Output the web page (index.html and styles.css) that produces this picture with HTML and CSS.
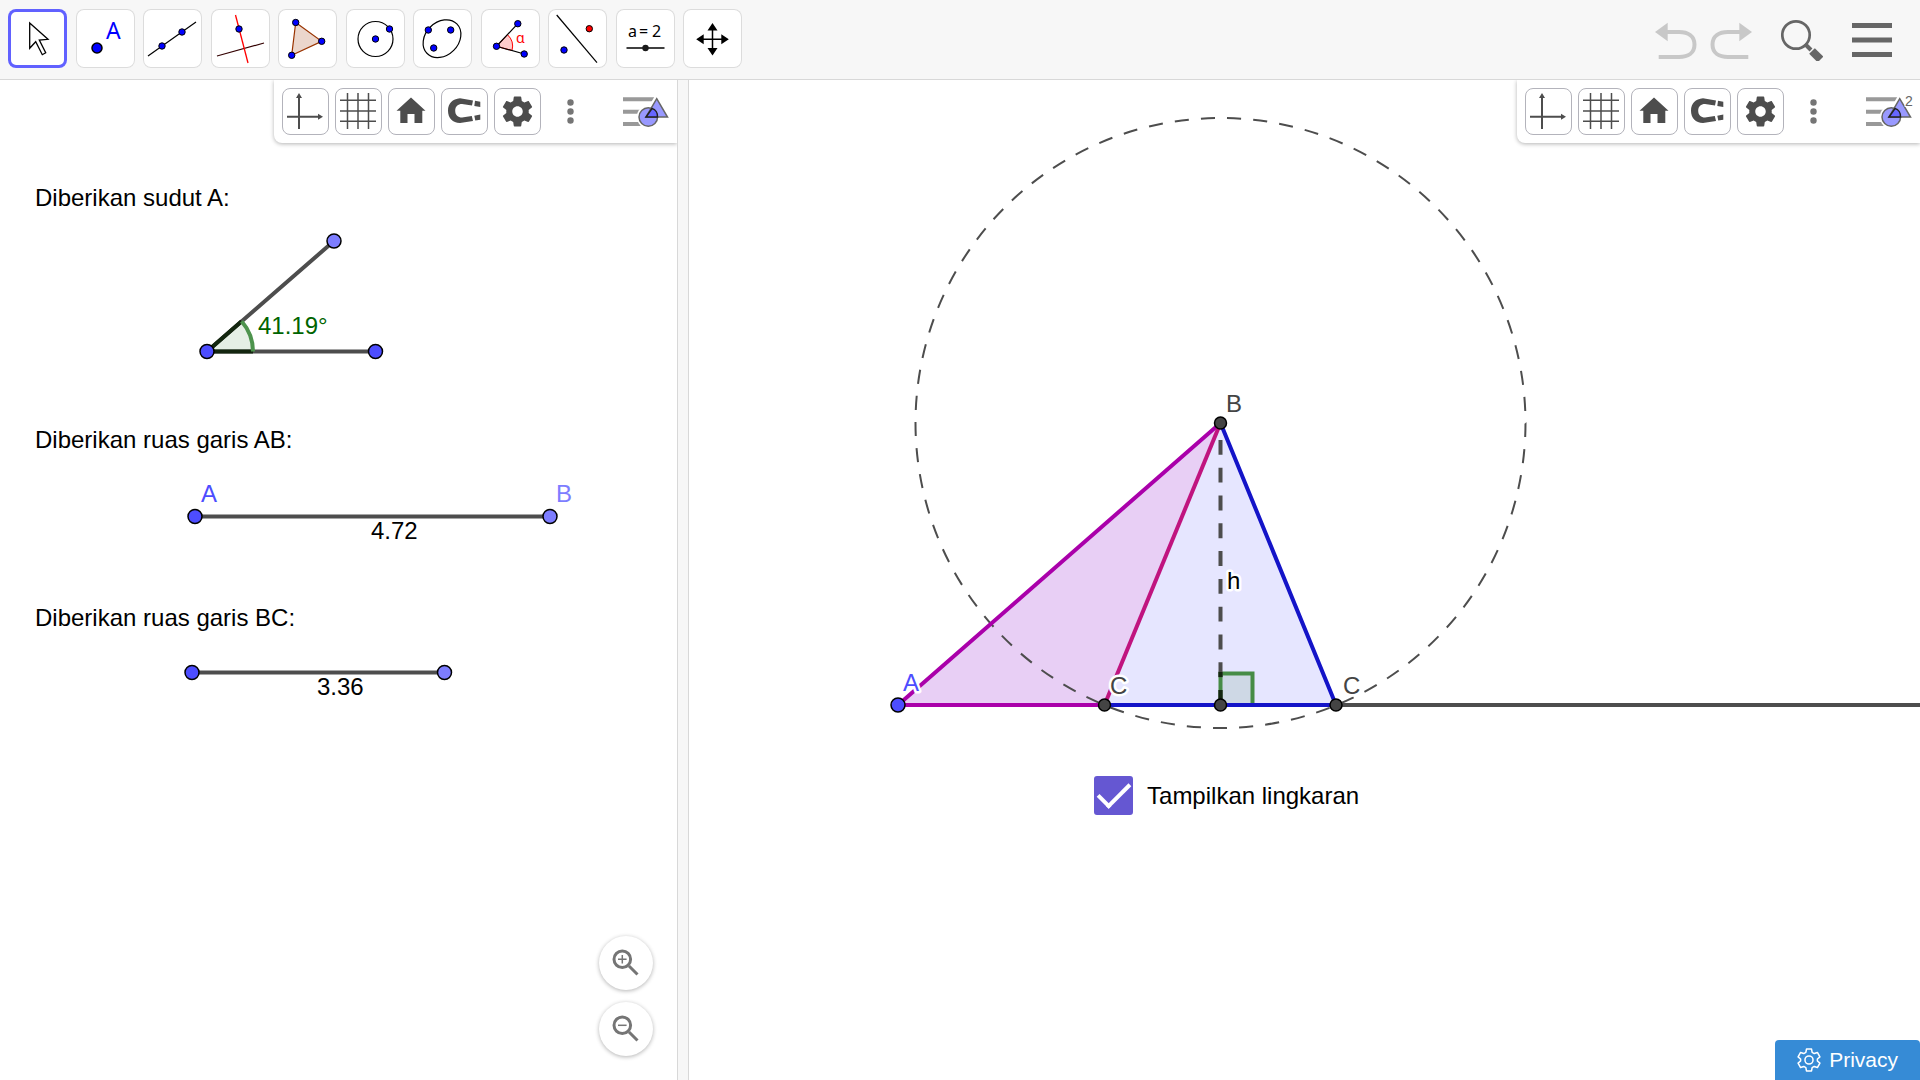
FILE: index.html
```
<!DOCTYPE html>
<html lang="id">
<head>
    <meta charset="UTF-8">
    <meta name="viewport" content="width=device-width, initial-scale=1.0">
    <title>GeoGebra Classic</title>
    <link rel="stylesheet" href="styles.css">
</head>
<body>
    <!-- icons shared by both style bars -->
    <svg class="symbols" aria-hidden="true">
        <symbol id="icon-axes" viewBox="0 0 45 45">
            <path d="M16 40V7M4 27.700H37" stroke="#4d4d4d" stroke-width="2" fill="none"/>
            <path d="M16 4l3 5h-6zM40 27.700l-5 -3v6z" fill="#4d4d4d"/>
        </symbol>
        <symbol id="icon-grid" viewBox="0 0 45 45">
            <path d="M11.500 4V40M22 4V40M32.500 4V40M4 11.300H40M4 22H40M4 32.300H40" stroke="#4d4d4d" stroke-width="1.500" fill="none"/>
        </symbol>
        <symbol id="icon-home" viewBox="0 0 45 45">
            <path d="M22 8.500L36.500 21.700H33.300V34H25.500V25H18.500V34H11.300V21.700H7.500z" fill="#4d4d4d"/>
        </symbol>
        <symbol id="icon-magnet" viewBox="0 0 45 45">
            <path d="M31 11.500L18 9.300C10.500 9.800 6 14.500 6 21.700S10.500 33.600 18 34L31 32L29.800 27L20 28.500C16 28.500 13.200 26 13.200 21.700S16 15 20 15L30 16.500zM33 11.800l5.300 1V18l-6 -1zM32.300 26.700l6 -1.200v5.300l-5 .700z" fill="#4d4d4d"/>
        </symbol>
        <symbol id="icon-gear" viewBox="-3 -3 30 30">
            <path fill="#4d4d4d" d="M19.430 12.980c.04-.32.07-.64.07-.98s-.03-.66-.07-.98l2.110-1.650c.19-.15.24-.42.12-.64l-2-3.460c-.12-.22-.39-.3-.61-.22l-2.490 1c-.52-.4-1.080-.73-1.690-.98l-.38-2.650C14.460 2.180 14.250 2 14 2h-4c-.25 0-.46.18-.49.42l-.38 2.650c-.61.25-1.170.59-1.690.98l-2.490-1c-.23-.09-.49 0-.61.22l-2 3.460c-.13.22-.07.49.12.64l2.110 1.650c-.04.32-.07.65-.07.98s.03.66.07.98l-2.110 1.650c-.19.15-.24.42-.12.64l2 3.460c.12.22.39.3.61.22l2.490-1c.52.4 1.080.73 1.690.98l.38 2.650c.03.24.24.42.49.42h4c.25 0 .46-.18.49-.42l.38-2.650c.61-.25 1.170-.59 1.690-.98l2.490 1c.23.09.49 0 .61-.22l2-3.460c.12-.22.07-.49-.12-.64l-2.110-1.650zM12 15.500c-1.930 0-3.500-1.570-3.500-3.500s1.570-3.500 3.500-3.500 3.500 1.570 3.500 3.500-1.570 3.500-3.500 3.500z"/>
        </symbol>
        <symbol id="icon-dots" viewBox="0 0 47 47">
            <g fill="#757575"><circle cx="23.500" cy="14.500" r="3.200"/><circle cx="23.500" cy="23.500" r="3.200"/><circle cx="23.500" cy="32.500" r="3.200"/></g>
        </symbol>
        <symbol id="icon-view" viewBox="0 0 48 47">
            <path d="M2 11.300H34M2 23.700H20M2 36H24" stroke="#999" stroke-width="4"/>
            <path d="M35.700 9.700L47 29H24.700z" stroke="#fff" stroke-width="5" fill="#fff"/>
            <circle cx="27.300" cy="29" r="11.500" fill="#fff"/>
            <circle cx="27.300" cy="29" r="9.300" fill="#9999ff" stroke="#666" stroke-width="1.500"/>
            <path d="M35.700 10.700L46.500 29H25z" fill="#9999ff" stroke="#666" stroke-width="1.500"/>
            <path d="M31 20.500L25 29H36.500C36.800 25 34.500 21.500 31 20.500z" fill="#6666ff" stroke="#222" stroke-width="1.500"/>
        </symbol>
    </svg>

    <header class="toolbar">
        <div class="tools">
            <button class="tool selected" aria-label="Pindah">
                <svg viewBox="0 0 59 59"><path d="M21.700 14L40 30.300L31.300 31L37.700 43.700L34.300 45.700L27.700 32.700L21.700 39.300z" fill="#fff" stroke="#000" stroke-width="1.300"/></svg>
            </button>
            <button class="tool" aria-label="Titik">
                <svg viewBox="0 0 59 59"><circle cx="21" cy="39" r="5" fill="#00f" stroke="#000" stroke-width="1.500"/><text class="tool-letter" x="30" y="30">A</text></svg>
            </button>
            <button class="tool" aria-label="Garis">
                <svg viewBox="0 0 59 59"><path d="M5 47L53 13" stroke="#000" stroke-width="1.200"/><g class="dots"><circle cx="19" cy="37" r="3.200"/><circle cx="39" cy="23" r="3.200"/></g></svg>
            </button>
            <button class="tool" aria-label="Garis tegak lurus">
                <svg viewBox="0 0 59 59"><path d="M6 47L53 34" stroke="#300" stroke-width="1.200"/><path d="M24.500 6L37 54" stroke="#f00" stroke-width="1.300"/><g class="dots"><circle cx="28" cy="20" r="3.200"/></g></svg>
            </button>
            <button class="tool" aria-label="Poligon">
                <svg viewBox="0 0 59 59"><path d="M17.700 13.500L43.700 32.300L13.700 46.300z" fill="#ebd6cc" stroke="#993300" stroke-width="1.200"/><g class="dots"><circle cx="17.700" cy="13.500" r="3.200"/><circle cx="43.700" cy="32.300" r="3.200"/><circle cx="13.700" cy="46.300" r="3.200"/></g></svg>
            </button>
            <button class="tool" aria-label="Lingkaran">
                <svg viewBox="0 0 59 59"><circle cx="29.500" cy="30" r="17.500" fill="none" stroke="#000" stroke-width="1.200"/><g class="dots"><circle cx="29.500" cy="30" r="3.200"/><circle cx="43.500" cy="20" r="3.200"/></g></svg>
            </button>
            <button class="tool" aria-label="Elips">
                <svg viewBox="0 0 59 59"><ellipse cx="29" cy="29.700" rx="21" ry="16.500" transform="rotate(-45 29 29.700)" fill="none" stroke="#000" stroke-width="1.200"/><g class="dots"><circle cx="15.300" cy="21" r="3.200"/><circle cx="37.700" cy="21" r="3.200"/><circle cx="20.700" cy="39" r="3.200"/></g></svg>
            </button>
            <button class="tool" aria-label="Sudut">
                <svg viewBox="0 0 59 59"><path d="M15.500 37.300L26.500 25.700A16 16 0 0 1 31 41.500z" fill="#ffcccc" stroke="#f00" stroke-width="1"/><path d="M36.800 14.700L15.500 37.300L43.200 45" fill="none" stroke="#000" stroke-width="1.200"/><text class="tool-alpha" x="35" y="34">α</text><g class="dots"><circle cx="36.800" cy="14.700" r="3.200"/><circle cx="15.500" cy="37.300" r="3.200"/><circle cx="43.200" cy="45" r="3.200"/></g></svg>
            </button>
            <button class="tool" aria-label="Refleksi">
                <svg viewBox="0 0 59 59"><path d="M8.700 6L49 53.700" stroke="#000" stroke-width="1.200"/><g class="dots"><circle class="red" cx="41.300" cy="19.700" r="3.200"/><circle cx="16" cy="41" r="3.200"/></g></svg>
            </button>
            <button class="tool" aria-label="Slider">
                <svg viewBox="0 0 59 59"><text class="tool-value" y="28"><tspan x="12">a</tspan><tspan x="23">=</tspan><tspan x="36">2</tspan></text><path d="M10.500 39H48.500" stroke="#000" stroke-width="1.300"/><circle cx="29.500" cy="39" r="3.200" fill="#1a1a1a"/></svg>
            </button>
            <button class="tool" aria-label="Geser tampilan">
                <svg viewBox="0 0 59 59"><path d="M17 30.300H42M29.500 18V43" stroke="#000" stroke-width="1.500"/><path d="M29.500 14l5 7.500h-10zM29.500 46.600l5 -7.500h-10zM13.200 30.300l7.500 -5v10zM45.800 30.300l-7.500 -5v10z"/></svg>
            </button>
        </div>
        <div class="actions">
            <div class="history">
                <button class="action" aria-label="Urungkan">
                    <svg viewBox="0 0 42 42"><path d="M0 13L12.700 3.700V22.300z" fill="#c8c8c8"/><path d="M12 13H24C33 13 39.500 17 39.500 25.500S33 38 24 38H3.700" fill="none" stroke="#c8c8c8" stroke-width="4"/></svg>
                </button>
                <button class="action" aria-label="Ulangi">
                    <svg viewBox="0 0 42 42"><path d="M42 13L29.300 3.700V22.300z" fill="#c8c8c8"/><path d="M30 13H18C9 13 2.500 17 2.500 25.500S9 38 18 38H38.300" fill="none" stroke="#c8c8c8" stroke-width="4"/></svg>
                </button>
            </div>
            <button class="action" aria-label="Cari">
                <svg viewBox="0 0 42 42"><circle cx="15" cy="16" r="13.700" fill="none" stroke="#666" stroke-width="2.700"/><path d="M24 25L30 31" stroke="#666" stroke-width="4"/><path d="M31 32L39.500 40.500" stroke="#666" stroke-width="8"/></svg>
            </button>
            <button class="action" aria-label="Menu">
                <svg viewBox="0 0 42 42"><path d="M1 6.500H41M1 21H41M1 35.500H41" stroke="#666" stroke-width="5"/></svg>
            </button>
        </div>
    </header>

    <main class="views">
        <section class="view">
            <svg class="canvas">
                <text x="35" y="126">Diberikan sudut A:</text>
                <path class="segment" d="M334 161L207 271.500H375.500"/>
                <path d="M207 271.500L241.600 241.200A46 46 0 0 1 253 271.500z" fill="#006400" fill-opacity=".1"/>
                <path d="M241.600 241.200L207 271.500H253" fill="none" stroke="#13260f" stroke-width="4"/>
                <path d="M241.600 241.200A46 46 0 0 1 253 271.500" fill="none" stroke="#4d934d" stroke-width="4"/>
                <text class="angle" x="258" y="254">41.19°</text>
                <circle class="point" cx="207" cy="271.500" r="7"/>
                <circle class="point" cx="375.500" cy="271.500" r="7"/>
                <circle class="point light" cx="334" cy="161" r="7"/>

                <text x="35" y="368">Diberikan ruas garis AB:</text>
                <path class="segment" d="M195 436.500H550"/>
                <circle class="point" cx="195" cy="436.500" r="7"/>
                <circle class="point light" cx="550" cy="436.500" r="7"/>
                <text class="name-free" x="201" y="422">A</text>
                <text class="name-light" x="556" y="422">B</text>
                <text x="371" y="459">4.72</text>

                <text x="35" y="546">Diberikan ruas garis BC:</text>
                <path class="segment" d="M192 592.500H444.500"/>
                <circle class="point" cx="192" cy="592.500" r="7"/>
                <circle class="point light" cx="444.500" cy="592.500" r="7"/>
                <text x="317" y="615">3.36</text>
            </svg>
            <div class="stylebar">
                <button aria-label="Sumbu"><svg><use href="#icon-axes"/></svg></button>
                <button aria-label="Kisi"><svg><use href="#icon-grid"/></svg></button>
                <button aria-label="Tampilan standar"><svg><use href="#icon-home"/></svg></button>
                <button aria-label="Tangkap titik"><svg><use href="#icon-magnet"/></svg></button>
                <button aria-label="Pengaturan"><svg><use href="#icon-gear"/></svg></button>
                <button class="plain" aria-label="Lainnya"><svg><use href="#icon-dots"/></svg></button>
                <button class="plain view-switch" aria-label="Tampilan grafik"><svg><use href="#icon-view"/></svg></button>
            </div>
            <div class="zoom">
                <button aria-label="Perbesar"><svg viewBox="0 0 54 54"><circle cx="23.300" cy="23.300" r="8.300"/><path d="M30 30L38.500 38.500"/><path class="thin" d="M19 23.300H27.600M23.300 19V27.600"/></svg></button>
                <button aria-label="Perkecil"><svg viewBox="0 0 54 54"><circle cx="23.300" cy="23.300" r="8.300"/><path d="M30 30L38.500 38.500"/><path class="thin" d="M19 23.300H27.600"/></svg></button>
            </div>
        </section>

        <div class="divider"></div>

        <section class="view">
            <svg class="canvas">
                <path d="M531.500 343L415.500 625H647z" fill="#e6e6ff"/>
                <path d="M209 625L531.500 343L415.500 625z" fill="#e8cff5"/>
                <!-- 73 dashes around the circle -->
                <circle cx="531.500" cy="343" r="305" pathLength="1898" fill="none" stroke="#4d4d4d" stroke-width="2" stroke-dasharray="14 12"/>
                <path class="segment" d="M647 625H3000"/>
                <path d="M531.500 625V593.500H563.500V625z" fill="#006400" fill-opacity=".1"/>
                <path d="M531.500 625V593.500H563.500V625" fill="none" stroke="#468c46" stroke-width="4"/>
                <path class="segment altitude" d="M531.500 625V343" pathLength="284"/>
                <path d="M531.500 625V610M531.500 597V592" stroke="#13260f" stroke-width="4"/>
                <path d="M415.500 625H647L531.500 343" fill="none" stroke="#1414c8" stroke-width="4"/>
                <path d="M415.500 625H209L531.500 343" fill="none" stroke="#aa00aa" stroke-width="4"/>
                <path d="M531.500 343L415.500 625" stroke="#c0147f" stroke-width="4"/>

                <g class="halo">
                    <text class="name-free" x="214" y="611">A</text>
                    <text class="name" x="421" y="614">C</text>
                    <text class="name" x="654" y="614">C</text>
                    <text class="name" x="537" y="332">B</text>
                    <text x="538" y="509">h</text>
                </g>
                <circle class="point" cx="209" cy="625" r="7"/>
                <circle class="point dark" cx="415.500" cy="625" r="6"/>
                <circle class="point dark" cx="531.500" cy="625" r="6"/>
                <circle class="point dark" cx="647" cy="625" r="6"/>
                <circle class="point dark" cx="531.500" cy="343" r="6"/>
            </svg>
            <div class="stylebar">
                <button aria-label="Sumbu"><svg><use href="#icon-axes"/></svg></button>
                <button aria-label="Kisi"><svg><use href="#icon-grid"/></svg></button>
                <button aria-label="Tampilan standar"><svg><use href="#icon-home"/></svg></button>
                <button aria-label="Tangkap titik"><svg><use href="#icon-magnet"/></svg></button>
                <button aria-label="Pengaturan"><svg><use href="#icon-gear"/></svg></button>
                <button class="plain" aria-label="Lainnya"><svg><use href="#icon-dots"/></svg></button>
                <button class="plain view-switch" aria-label="Tampilan grafik 2"><svg><use href="#icon-view"/><text x="41" y="18">2</text></svg></button>
            </div>
            <label class="show-circle">
                <input type="checkbox" checked>
                Tampilkan lingkaran
            </label>
        </section>
    </main>

    <button class="privacy">
        <svg viewBox="1 1 22 22"><path fill="none" stroke="#fff" stroke-width="1.400" stroke-linejoin="round" d="M9.700 2h4.600l.6 3 1.900 1.100 2.900-1 2.300 4-2.300 2v1.800l2.300 2-2.300 4-2.900-1-1.900 1.100-.6 3H9.700l-.6-3-1.900-1.100-2.900 1-2.300-4 2.300-2v-1.800l-2.300-2 2.300-4 2.900 1L9.100 5z"/><circle cx="12" cy="12" r="3.700" fill="none" stroke="#fff" stroke-width="1.400"/></svg>
        Privacy
    </button>
</body>
</html>
```

FILE: styles.css
```
* {
    box-sizing: border-box;
}

body {
    font-family: "Liberation Sans", Arial, sans-serif;
    font-size: 24px;
    margin: 0;
    height: 100vh;
    display: flex;
    flex-direction: column;
    overflow: hidden;
    background: white;
    color: black;
}

button {
    padding: 0;
    border: none;
    background: none;
    font-family: inherit;
    cursor: pointer;
}

svg {
    display: block;
}

.symbols {
    position: absolute;
    width: 0;
    height: 0;
}

/* top toolbar */
.toolbar {
    display: flex;
    justify-content: space-between;
    align-items: center;
    height: 80px;
    padding: 0 27px 2px 8px;
    background: #f7f7f7;
    border-bottom: 1px solid #d8d8d8;
    flex-shrink: 0;
}

.tools {
    display: flex;
    justify-content: space-between;
    width: 734px;
}

.tool {
    width: 59px;
    height: 59px;
    border-radius: 8px;
    background: white;
    box-shadow: inset 0 0 0 1px #dcdcdc;
}

.tool.selected {
    box-shadow: inset 0 0 0 3px #6161ff;
}

.tool svg {
    width: 59px;
    height: 59px;
}

.dots circle {
    fill: #0000ff;
    stroke: black;
    stroke-width: 1px;
}

.dots .red {
    fill: #ff0000;
}

.tool-letter {
    font: 23px "Noto Sans", sans-serif;
    fill: #0000ff;
}

.tool-alpha {
    font: 14px "Noto Sans", sans-serif;
    fill: #ff0000;
}

.tool-value {
    font: 16px "Noto Sans", sans-serif;
}

.actions {
    display: flex;
    align-items: center;
    gap: 28px;
    padding-top: 2px;
}

.history {
    display: flex;
    gap: 13px;
    margin-right: 1px;
}

.action svg {
    width: 42px;
    height: 42px;
}

/* graphics views */
.views {
    flex: 1;
    display: grid;
    grid-template-columns: minmax(0, 11fr) 12px minmax(0, 20fr);
    min-height: 0;
}

.view {
    position: relative;
    overflow: hidden;
}

.divider {
    background: #f7f7f7;
    border-left: 1px solid #d8d8d8;
    border-right: 1px solid #d8d8d8;
}

.canvas {
    width: 100%;
    height: 100%;
}

.segment {
    fill: none;
    stroke: #4d4d4d;
    stroke-width: 4px;
}

.altitude {
    stroke-dasharray: 15 13;
}

.point {
    fill: #4d4dff;
    stroke: black;
    stroke-width: 1.5px;
}

.point.light {
    fill: #7d7dff;
}

.point.dark {
    fill: #444444;
}

.angle {
    fill: #006400;
}

.name {
    fill: #444444;
}

.name-free {
    fill: #4d4dff;
}

.name-light {
    fill: #7d7dff;
}

.halo text {
    stroke: white;
    stroke-width: 5px;
    stroke-linejoin: round;
    paint-order: stroke;
}

.stylebar {
    position: absolute;
    top: 0;
    right: 0;
    display: flex;
    gap: 6px;
    width: 403px;
    padding: 8px;
    background: white;
    border-bottom-left-radius: 8px;
    box-shadow: 0 1px 4px rgba(0, 0, 0, 0.3);
}

.stylebar button {
    width: 47px;
    height: 47px;
    border: 1px solid #b3b3bb;
    border-radius: 8px;
}

.stylebar svg {
    width: 100%;
    height: 100%;
    overflow: visible;
}

.stylebar .plain {
    border: none;
}

.stylebar .view-switch {
    width: 48px;
    margin-left: auto;
}

.view-switch text {
    font-size: 14px;
    fill: #666666;
    stroke: white;
    stroke-width: 2px;
    paint-order: stroke;
}

.zoom {
    position: absolute;
    right: 24px;
    bottom: 24px;
    display: flex;
    flex-direction: column;
    gap: 12px;
}

.zoom button {
    width: 54px;
    height: 54px;
    border-radius: 50%;
    background: white;
    box-shadow: 0 1px 4px rgba(0, 0, 0, 0.3);
}

.zoom svg {
    fill: none;
    stroke: #757575;
    stroke-width: 3px;
}

.zoom .thin {
    stroke-width: 1.5px;
}

/* checkbox lying on the drawing */
.show-circle {
    position: absolute;
    left: 405px;
    top: 696px;
    display: flex;
    align-items: center;
    gap: 14px;
}

.show-circle input {
    appearance: none;
    width: 39px;
    height: 39px;
    margin: 0;
    border-radius: 3px;
    border: 2px solid #6557d2;
    display: grid;
    place-items: center;
}

.show-circle input:checked {
    background: #6557d2;
}

.show-circle input:checked::before {
    content: "";
    width: 28px;
    height: 13px;
    margin-bottom: 8px;
    border-left: 4px solid white;
    border-bottom: 4px solid white;
    transform: rotate(-45deg);
}

.privacy {
    position: fixed;
    right: 0;
    bottom: 0;
    display: flex;
    align-items: center;
    gap: 8px;
    height: 40px;
    padding: 0 22px;
    font-size: 21px;
    color: white;
    background: #368bd6;
    border-radius: 4px 4px 0 0;
}

.privacy svg {
    width: 24px;
    height: 24px;
}
```
